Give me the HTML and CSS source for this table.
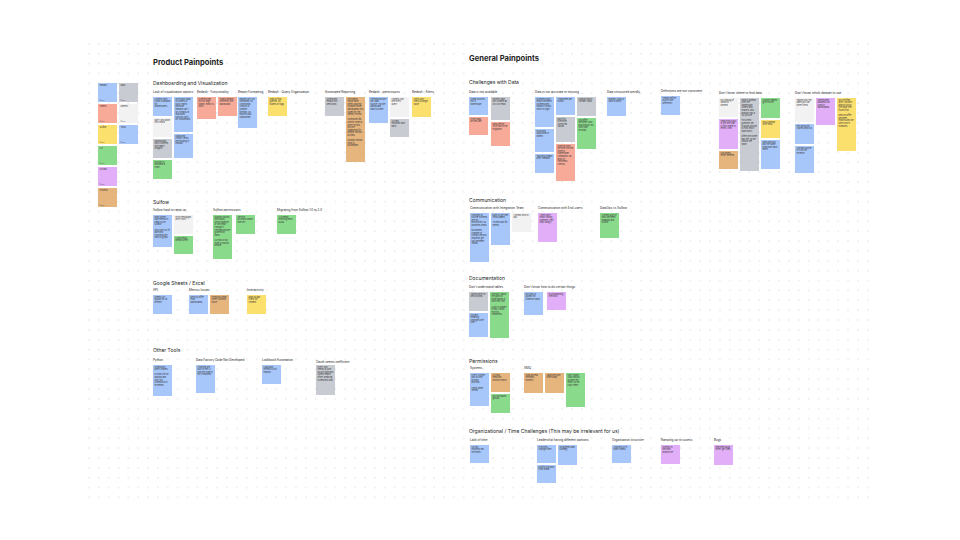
FILE: index.html
```html
<!DOCTYPE html>
<html lang="en">
<head>
<meta charset="utf-8">
<title>Painpoints board</title>
<link rel="stylesheet" href="styles.css">
</head>
<body>
<main class="board">

  <!-- legend / palette -->
  <div class="node palette">
    <div class="col">
      <div class="note blue swatch"><p>Redash</p><span class="tag">Owner</span></div>
      <div class="note salmon swatch"><p>Sheets</p><span class="tag">Owner</span></div>
      <div class="note yellow swatch"><p>Sulfow</p><span class="tag">Owner</span></div>
      <div class="note green swatch"><p>UX</p><span class="tag">Owner</span></div>
      <div class="note purple swatch"><p>Access</p><span class="tag">Owner</span></div>
      <div class="note orange swatch"><p>Process</p><span class="tag">Owner</span></div>
    </div>
    <div class="col">
      <div class="note grey swatch"><p>Data</p><span class="tag">Owner</span></div>
      <div class="note white swatch"><p>Generic</p><span class="tag">Owner</span></div>
      <div class="note blue swatch"><p>Tools</p><span class="tag">Owner</span></div>
    </div>
  </div>

  <!-- PRODUCT PAINPOINTS -->
  <h1 class="node title t-product">Product Painpoints</h1>
  <h2 class="node heading h-dash">Dashboarding and Visualization</h2>

  <section class="node group g-vis">
    <div class="label">Lack of visualization options</div>
    <div class="cols">
      <div class="col">
        <div class="note blue h19"><p>Limited chart types in Redash for stakeholders</p></div>
        <div class="note white h19"><p>Can't drill down into charts</p></div>
        <div class="note grey h19"><p>Dashboards look cluttered with many widgets</p></div>
        <div class="note green h19"><p>No way to annotate a chart</p></div>
      </div>
      <div class="col">
        <div class="note blue h35"><p>We export data to Sheets to build charts because Redash can't do combos or dual axes. Colours can't be customised.</p></div>
        <div class="note blue h24"><p>Maps and cohort views are missing in Redash</p></div>
      </div>
    </div>
  </section>

  <section class="node group g-func">
    <div class="label">Redash - Functionality</div>
    <div class="cols">
      <div class="note salmon h22"><p>Queries time out on large tables, editor is slow</p></div>
      <div class="note salmon h19"><p>Filters behave differently per dashboard</p></div>
    </div>
  </section>

  <section class="node group g-format">
    <div class="label">Report Formatting</div>
    <div class="cols">
      <div class="note blue h31"><p>Tables can't be formatted: no conditional colours or number formats, so reports look unpolished</p></div>
    </div>
  </section>

  <section class="node group g-query">
    <div class="label">Redash - Query Organization</div>
    <div class="cols">
      <div class="note yellow h19"><p>Hard to find queries, no folders or tags</p></div>
    </div>
  </section>

  <section class="node group g-auto">
    <div class="label">Automated Reporting</div>
    <div class="cols">
      <div class="note grey h19"><p>Scheduled emails only send links</p></div>
      <div class="note orange h65"><p>We spend hours each week copying numbers from dashboards into slides for the weekly review.</p><p>Schedules fail silently when a query errors. No PDF snapshots for people without access.</p><p>Nobody knows what is automated.</p></div>
    </div>
  </section>

  <section class="node group g-rperm">
    <div class="label">Redash - permissions</div>
    <div class="cols">
      <div class="col">
        <div class="note blue h26"><p>Permissions are per data source, not per dashboard, hard to share</p></div>
      </div>
      <div class="col">
        <div class="note white h20"><p>Viewers can see every query</p></div>
        <div class="note grey h18"><p>Access requests take days</p></div>
      </div>
    </div>
  </section>

  <section class="node group g-alerts">
    <div class="label">Redash - Alerts</div>
    <div class="cols">
      <div class="note yellow h20"><p>Alerts only check a single value</p></div>
    </div>
  </section>

  <h2 class="node heading h-sulfow">Sulfow</h2>

  <section class="node group g-ramp">
    <div class="label">Sulfow hard to ramp up</div>
    <div class="cols">
      <div class="col">
        <div class="note blue h32"><p>New joiners take weeks to ramp up on Sulfow.</p><p>Docs are out of date and concepts are hard to grasp.</p></div>
      </div>
      <div class="col">
        <div class="note white h19"><p>Error messages are cryptic</p></div>
        <div class="note green h18"><p>Local setup breaks often</p></div>
      </div>
    </div>
  </section>

  <section class="node group g-sperm">
    <div class="label">Sulfow permissions</div>
    <div class="cols">
      <div class="note green h44"><p>Nobody knows who owns which pipeline or who may change it. Permissions are granted by hand.</p><p>Access is too wide or blocks people.</p></div>
      <div class="note green h19"><p>Service accounts share one key</p></div>
    </div>
  </section>

  <section class="node group g-migr">
    <div class="label">Migrating from Sulfow 1.0 to 2.0</div>
    <div class="cols">
      <div class="note green h19"><p>2.0 needs rewriting most DAGs</p></div>
    </div>
  </section>

  <h2 class="node heading h-sheets">Google Sheets / Excel</h2>

  <section class="node group g-api">
    <div class="label">API</div>
    <div class="cols">
      <div class="note blue h19"><p>Sheets API quotas hit on refresh</p></div>
    </div>
  </section>

  <section class="node group g-metrics">
    <div class="label">Metrics Issues</div>
    <div class="cols">
      <div class="note blue h19"><p>Metrics differ from dashboards</p></div>
      <div class="note orange h19"><p>Formulas break when columns move</p></div>
    </div>
  </section>

  <section class="node group g-interact">
    <div class="label">Interactivity</div>
    <div class="cols">
      <div class="note yellow h19"><p>Hard to add filters for viewers</p></div>
    </div>
  </section>

  <h2 class="node heading h-other">Other Tools</h2>

  <section class="node group g-python">
    <div class="label">Python</div>
    <div class="cols">
      <div class="note blue h31"><p>Notebooks aren't shared.</p><p>Scripts live on laptops and can't be scheduled or reviewed</p></div>
    </div>
  </section>

  <section class="node group g-factory">
    <div class="label">Data Factory Code Not Developed</div>
    <div class="cols">
      <div class="note blue h28"><p>Pipelines are built in the UI and the code is not versioned</p></div>
    </div>
  </section>

  <section class="node group g-lookbook">
    <div class="label">Lookbook Automation</div>
    <div class="cols">
      <div class="note blue h19"><p>Lookbook refresh is still manual</p></div>
    </div>
  </section>

  <section class="node group g-oauth">
    <div class="label">Oauth seems inefficient</div>
    <div class="cols">
      <div class="note grey h30"><p>Every tool needs its own OAuth login and tokens expire often, breaking scheduled jobs</p></div>
    </div>
  </section>

  <!-- GENERAL PAINPOINTS -->
  <h1 class="node title t-general">General Painpoints</h1>
  <h2 class="node heading h-data">Challenges with Data</h2>

  <section class="node group g-avail">
    <div class="label">Data is not available</div>
    <div class="cols">
      <div class="col">
        <div class="note blue h18"><p>Some sources not in warehouse</p></div>
        <div class="note salmon h18"><p>Event data arrives late</p></div>
      </div>
      <div class="col">
        <div class="note grey h23"><p>Partner data only shared as CSV by email</p></div>
        <div class="note salmon h24"><p>Data before 2019 lost in the migration</p></div>
      </div>
    </div>
  </section>

  <section class="node group g-accur">
    <div class="label">Data is not accurate or missing</div>
    <div class="cols">
      <div class="col">
        <div class="note blue h30"><p>Numbers don't match between systems and nobody knows which is right</p></div>
        <div class="note blue h23"><p>Nulls and duplicates in orders</p></div>
        <div class="note blue h19"><p>Tracking breaks after releases</p></div>
      </div>
      <div class="col">
        <div class="note blue h18"><p>Timezones are mixed</p></div>
        <div class="note grey h25"><p>Backfills overwrite corrected values</p></div>
        <div class="note salmon h37"><p>Missing rows are only noticed when a stakeholder complains. No tests or freshness checks.</p></div>
      </div>
      <div class="col">
        <div class="note grey h19"><p>Manual inputs contain typos</p></div>
        <div class="note green h31"><p>IDs differ between CRM and product so joins lose records</p></div>
      </div>
    </div>
  </section>

  <section class="node group g-weird">
    <div class="label">Data structured weirdly</div>
    <div class="cols">
      <div class="note blue h19"><p>Nested JSON is hard to query</p></div>
    </div>
  </section>

  <section class="node group g-defs">
    <div class="label">Definitions are not consistent</div>
    <div class="cols">
      <div class="note blue h19"><p>Teams define active user differently</p></div>
    </div>
  </section>

  <section class="node group g-where">
    <div class="label">Don't know where to find data</div>
    <div class="cols">
      <div class="col">
        <div class="note white h19"><p>No catalog of tables or owners</p></div>
        <div class="note purple h30"><p>Searching Slack is the only way to find where a metric lives</p></div>
        <div class="note orange h18"><p>Old tables never deleted</p></div>
      </div>
      <div class="col">
        <div class="note grey h73"><p>Data is spread over the warehouse, Sheets and exports, and nobody has a full picture.</p><p>For a new question we first ask around to find which table has it.</p><p>Often the owner has left, so we rebuild the table.</p></div>
      </div>
      <div class="col">
        <div class="note green h20"><p>Column names give no hint</p></div>
        <div class="note yellow h18"><p>Docs spread over wikis</p></div>
        <div class="note blue h29"><p>New analysts ask the same questions each week</p></div>
      </div>
    </div>
  </section>

  <section class="node group g-which">
    <div class="label">Don't know which dataset to use</div>
    <div class="cols">
      <div class="col">
        <div class="note white h24"><p>Tables look the same but use other filters</p></div>
        <div class="note blue h20"><p>Dev and prod copies show up</p></div>
        <div class="note blue h27"><p>Unclear source of truth for revenue</p></div>
      </div>
      <div class="col">
        <div class="note purple h27"><p>Deprecated datasets still used in dashboards</p></div>
      </div>
      <div class="col">
        <div class="note yellow h53"><p>No certified layer, so each analyst picks the table they found first.</p><p>Results differ between reports and we lose trust in numbers.</p></div>
      </div>
    </div>
  </section>

  <h2 class="node heading h-comm">Communication</h2>

  <section class="node group g-integ">
    <div class="label">Communication with Integration Team</div>
    <div class="cols">
      <div class="note blue h49"><p>Changes to source systems are not announced, so pipelines break.</p><p>No shared channel or contact person, requests get lost between teams.</p></div>
      <div class="note blue h32"><p>Hard to get new fields added.</p><p>Tickets wait for weeks</p></div>
      <div class="note white h19"><p>Unclear who to ask</p></div>
    </div>
  </section>

  <section class="node group g-users">
    <div class="label">Communication with End-users</div>
    <div class="cols">
      <div class="note purple h29"><p>Users don't report wrong numbers, they stop using it</p></div>
    </div>
  </section>

  <section class="node group g-ops">
    <div class="label">DataOps vs Sulfow</div>
    <div class="cols">
      <div class="note green h25"><p>Unclear split of work between DataOps and Sulfow</p></div>
    </div>
  </section>

  <h2 class="node heading h-docs">Documentation</h2>

  <section class="node group g-tables">
    <div class="label">Don't understand tables</div>
    <div class="cols">
      <div class="col">
        <div class="note grey h19"><p>Tables have no descriptions</p></div>
        <div class="note blue h24"><p>Column meaning changes over time</p></div>
      </div>
      <div class="col">
        <div class="note green h46"><p>We don't know the grain of most tables or how they join.</p><p>Logic is hidden in SQL views with no comments.</p></div>
      </div>
    </div>
  </section>

  <section class="node group g-howto">
    <div class="label">Don't know how to do certain things</div>
    <div class="cols">
      <div class="note blue h23"><p>No how-to guides for common tasks</p></div>
      <div class="note purple h18"><p>No onboarding checklist</p></div>
    </div>
  </section>

  <h2 class="node heading h-perm">Permissions</h2>

  <section class="node group g-systems">
    <div class="label">Systems</div>
    <div class="cols">
      <div class="col">
        <div class="note blue h33"><p>Every system has its own access process.</p><p>Setup takes weeks</p></div>
      </div>
      <div class="col">
        <div class="note orange h19"><p>Access removed without notice</p></div>
        <div class="note green h19"><p>No role based groups</p></div>
      </div>
    </div>
  </section>

  <section class="node group g-smq">
    <div class="label">SMQ</div>
    <div class="cols">
      <div class="note orange h20"><p>SMQ access renewed monthly</p></div>
      <div class="note orange h20"><p>Approvers are often away</p></div>
      <div class="note green h34"><p>Can't share SMQ results outside the team, so we copy them</p></div>
    </div>
  </section>

  <h2 class="node heading h-org">Organizational / Time Challenges (This may be irrelevant for us)</h2>

  <section class="node group g-time">
    <div class="label">Lack of time</div>
    <div class="cols">
      <div class="note blue h18"><p>Ad hoc requests eat the week</p></div>
    </div>
  </section>

  <section class="node group g-lead">
    <div class="label">Leadership having different opinions</div>
    <div class="cols">
      <div class="col">
        <div class="note blue h18"><p>Priorities change often</p></div>
        <div class="note blue h18"><p>Conflicting asks from leads</p></div>
      </div>
      <div class="col">
        <div class="note blue h20"><p>No agreed data strategy</p></div>
      </div>
    </div>
  </section>

  <section class="node group g-struct">
    <div class="label">Organization structure</div>
    <div class="cols">
      <div class="note blue h18"><p>Analysts sit in many teams</p></div>
    </div>
  </section>

  <section class="node group g-rampup">
    <div class="label">Ramping up to sucess</div>
    <div class="cols">
      <div class="note purple h19"><p>Months to become productive</p></div>
    </div>
  </section>

  <section class="node group g-bugs">
    <div class="label">Bugs</div>
    <div class="cols">
      <div class="note purple h20"><p>Reported bugs never get fixed</p></div>
    </div>
  </section>

</main>
</body>
</html>
```

FILE: styles.css
```css
* { box-sizing: border-box; margin: 0; padding: 0; }

html, body {
  width: 960px;
  height: 540px;
  overflow: hidden;
  background: #ffffff;
}

body {
  font-family: Inter, "Liberation Sans", sans-serif;
  color: #1e1e1e;
}

/* canvas */
.board {
  position: relative;
  width: 960px;
  height: 540px;
}

.board::before {
  content: "";
  position: absolute;
  left: 84.4px;
  top: 39px;
  width: 790px;
  height: 464px;
  background-image: radial-gradient(circle at center, #e0e0e0 0, #e0e0e0 0.45px, rgba(255,255,255,0) 0.9px);
  background-size: 9.87px 9.87px;
}

.node { position: absolute; }

/* text styles */
.title {
  font-size: 7.6px;
  line-height: 10px;
  font-weight: 700;
  color: #1e1e1e;
  white-space: nowrap;
}

.heading {
  font-size: 5px;
  line-height: 6px;
  font-weight: 400;
  color: #222;
  white-space: nowrap;
}

.label {
  font-size: 3px;
  line-height: 4px;
  color: #222;
  white-space: nowrap;
  margin-bottom: 3px;
}

/* layout inside clusters */
.cols {
  display: flex;
  gap: 2px;
  align-items: flex-start;
}

.col {
  display: flex;
  flex-direction: column;
  gap: 2px;
  width: 19px;
}

/* sticky notes */
.note {
  width: 19px;
  height: 19px;
  padding: 1.7px 1.6px;
  font-size: 2.1px;
  line-height: 2.6px;
  color: #333;
  overflow: hidden;
  box-shadow: 0 0.4px 0.9px rgba(0, 0, 0, 0.16);
}

.note p + p { margin-top: 2.6px; }

.swatch {
  display: flex;
  flex-direction: column;
  justify-content: space-between;
  padding-bottom: 1.2px;
}

.tag {
  font-size: 1.6px;
  line-height: 2px;
  color: #555;
}

.blue   { background: #a7c7fa; }
.salmon { background: #f8aa98; }
.yellow { background: #fce06d; }
.green  { background: #8ada8b; }
.purple { background: #e2aef7; }
.orange { background: #e6b57e; }
.grey   { background: #c8ccd2; }
.white  { background: #f2f2f2; }

.h18 { height: 18px; }
.h19 { height: 19px; }
.h20 { height: 20px; }
.h22 { height: 22px; }
.h23 { height: 23px; }
.h24 { height: 24px; }
.h25 { height: 25px; }
.h26 { height: 26px; }
.h27 { height: 27px; }
.h28 { height: 28px; }
.h29 { height: 29px; }
.h30 { height: 30px; }
.h31 { height: 31px; }
.h32 { height: 32px; }
.h33 { height: 33px; }
.h34 { height: 34px; }
.h35 { height: 35px; }
.h37 { height: 37px; }
.h44 { height: 44px; }
.h46 { height: 46px; }
.h49 { height: 49px; }
.h53 { height: 53px; }
.h65 { height: 65px; }
.h73 { height: 73px; }

/* placement of items on the board */
.palette { left: 98px; top: 83px; display: flex; gap: 2px; align-items: flex-start; }

.t-product { left: 153px; top: 58px; }
.t-general { left: 469px; top: 54px; }

.h-dash   { left: 153px; top: 80px; }
.h-sulfow { left: 153px; top: 199px; }
.h-sheets { left: 153px; top: 280px; }
.h-other  { left: 153px; top: 347px; }
.h-data   { left: 469px; top: 78.5px; }
.h-comm   { left: 469px; top: 197px; }
.h-docs   { left: 469px; top: 274.5px; }
.h-perm   { left: 469px; top: 358px; }
.h-org    { left: 469px; top: 428px; }

.g-vis      { left: 153px; top: 90px; }
.g-func     { left: 197px; top: 90px; }
.g-format   { left: 238px; top: 90px; }
.g-query    { left: 268px; top: 90px; }
.g-auto     { left: 325px; top: 90px; }
.g-rperm    { left: 369px; top: 90px; }
.g-alerts   { left: 412px; top: 90px; }

.g-ramp     { left: 153px; top: 208px; }
.g-sperm    { left: 213px; top: 208px; }
.g-migr     { left: 277px; top: 208px; }

.g-api      { left: 153px; top: 288px; }
.g-metrics  { left: 189px; top: 288px; }
.g-interact { left: 247px; top: 288px; }

.g-python   { left: 153px; top: 358px; }
.g-factory  { left: 196px; top: 358px; }
.g-lookbook { left: 262px; top: 358px; }
.g-oauth    { left: 316px; top: 360px; }
.g-oauth .label { margin-bottom: 1px; }

.g-avail    { left: 469px; top: 90px; }
.g-accur    { left: 535px; top: 90px; }
.g-weird    { left: 607px; top: 90px; }
.g-defs     { left: 661px; top: 89px; }
.g-where    { left: 719px; top: 91px; }
.g-which    { left: 795px; top: 91px; }

.g-integ    { left: 470px; top: 206px; }
.g-users    { left: 538px; top: 206px; }
.g-ops      { left: 600px; top: 206px; }

.g-tables   { left: 469px; top: 285px; }
.g-howto    { left: 524px; top: 285px; }

.g-systems  { left: 470px; top: 366px; }
.g-smq      { left: 524px; top: 366px; }

.g-time     { left: 470px; top: 438px; }
.g-lead     { left: 537px; top: 438px; }
.g-struct   { left: 612px; top: 438px; }
.g-rampup   { left: 661px; top: 438px; }
.g-bugs     { left: 714px; top: 438px; }

.g-sperm .cols,
.g-howto .cols { gap: 4px; }
.g-avail .cols { gap: 3px; }
```
